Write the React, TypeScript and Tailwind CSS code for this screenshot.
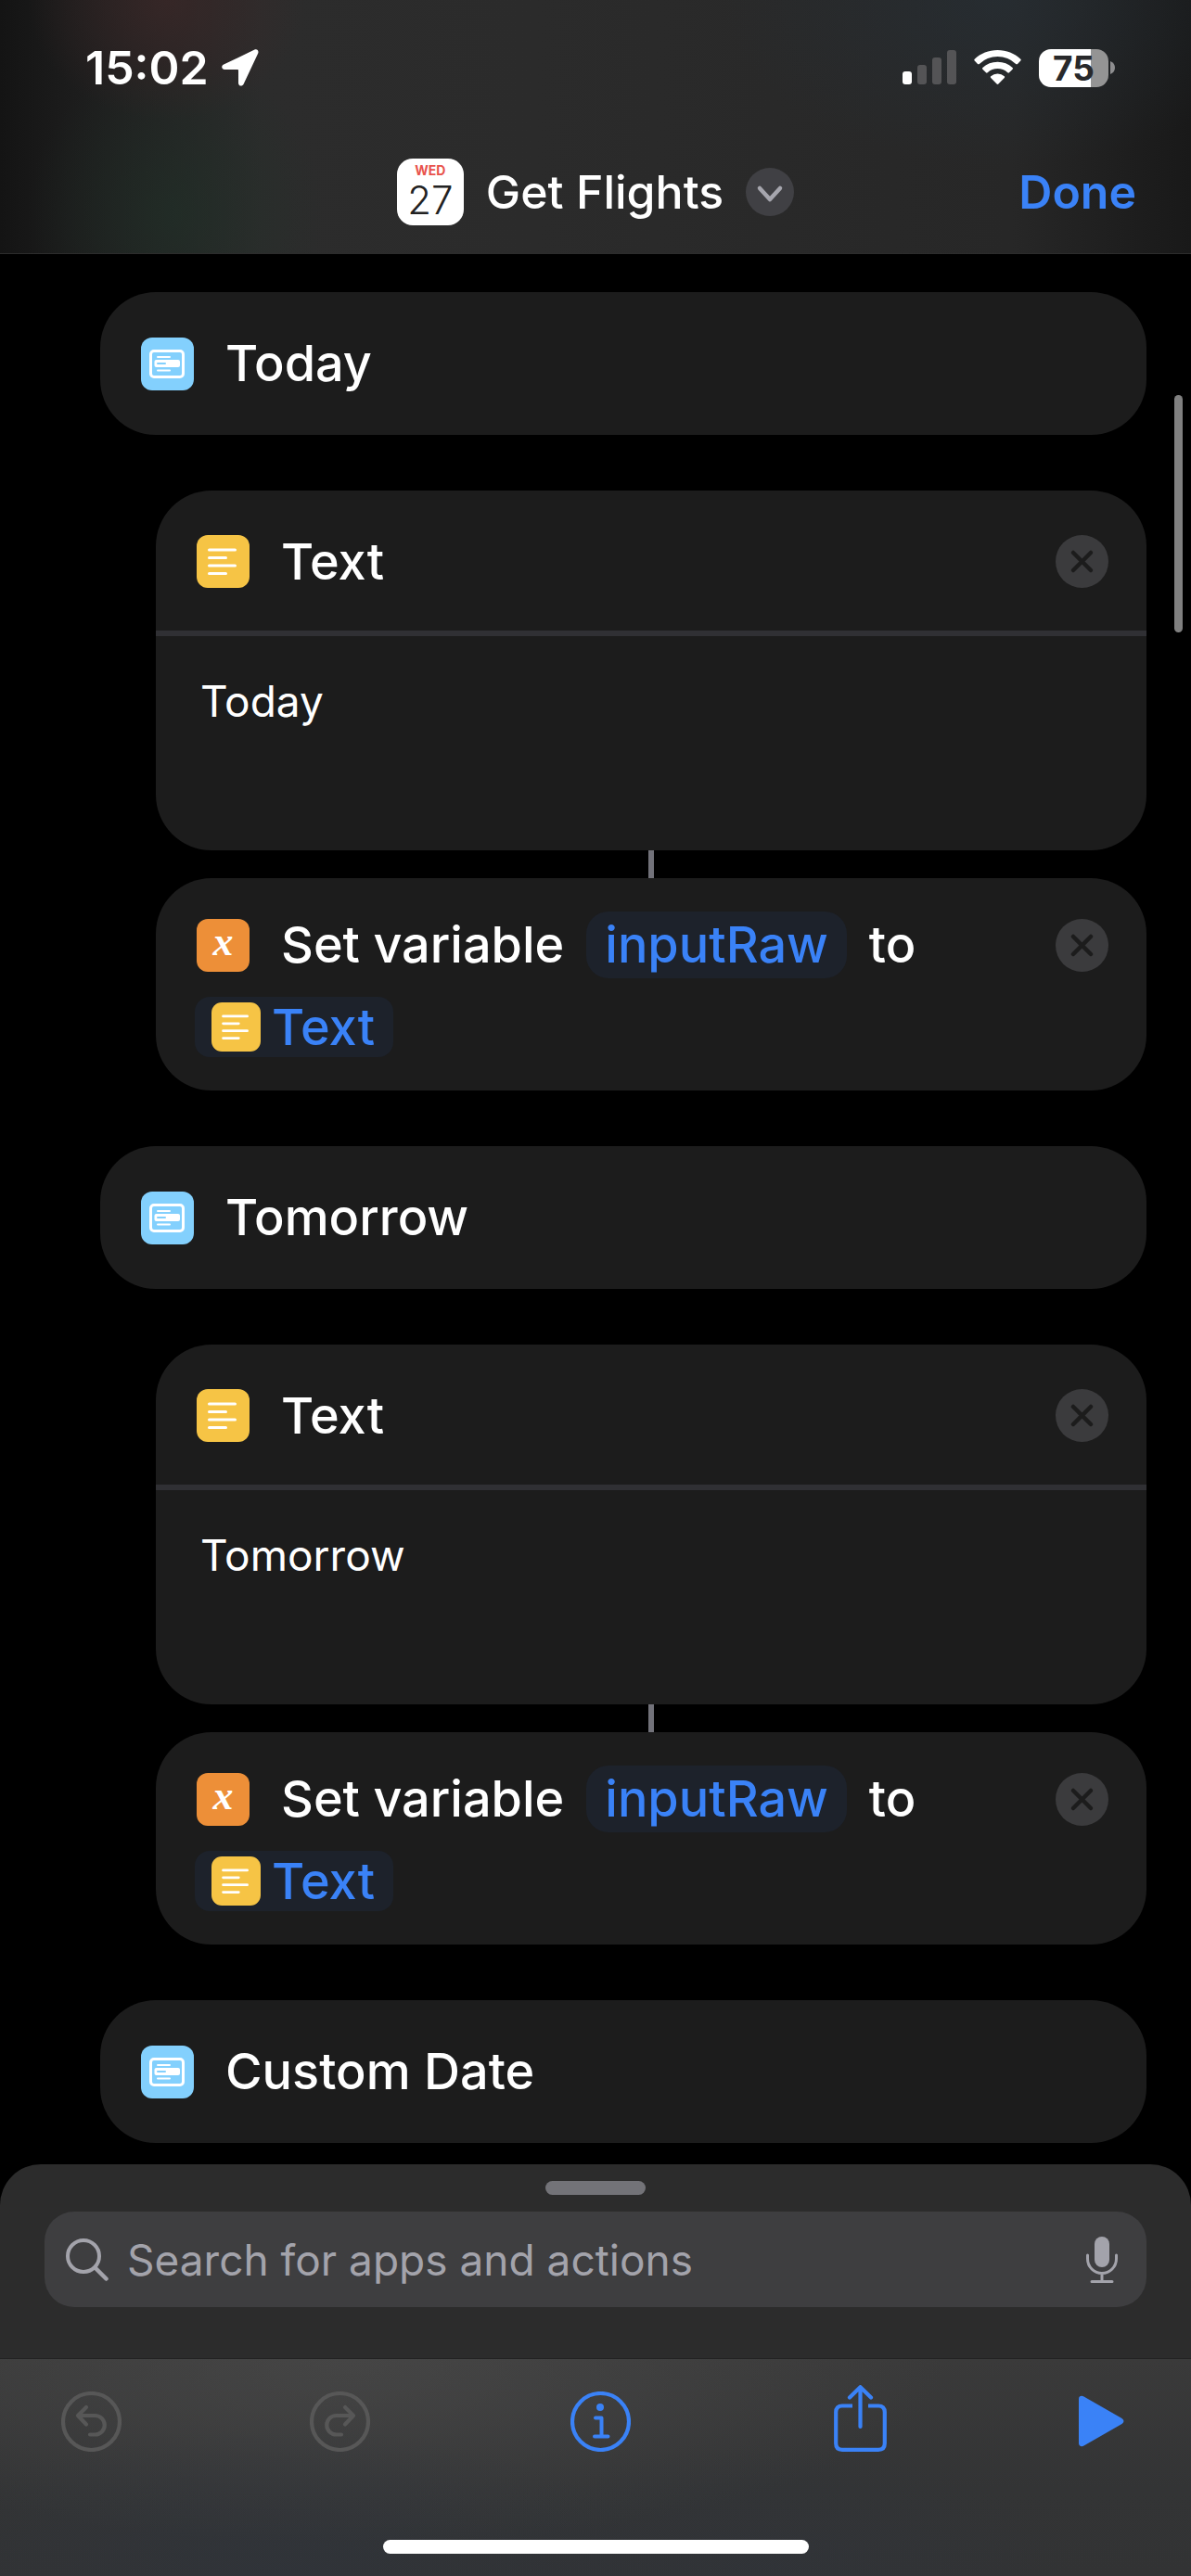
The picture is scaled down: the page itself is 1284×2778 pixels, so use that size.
import React from "react";

const TextLinesIcon = ({ className }: { className: string }) => (
  <svg viewBox="0 0 57 57" className={className} aria-hidden="true">
    <rect width="57" height="57" rx="12" fill="#f6c445" />
    <g stroke="#fff" strokeWidth="3" strokeLinecap="round">
      <path d="M13.5 16H41.5M13.5 24.5H31.5M13.5 33H41.5M13.5 41.5H31.5" />
    </g>
  </svg>
);

const MenuItemIcon = () => (
  <svg viewBox="0 0 57 57" className="size-[57px] shrink-0" aria-hidden="true">
    <rect width="57" height="57" rx="12" fill="#83d0fd" />
    <rect x="10.5" y="14.5" width="35" height="28" rx="3.5" fill="none" stroke="#fff" strokeWidth="3" />
    <rect x="14.5" y="24" width="27.5" height="8" rx="2" fill="#fff" />
    <path d="M18 21H31M18 35.5H31" stroke="#fff" strokeWidth="2" strokeLinecap="round" />
    <path d="M18 28H26" stroke="#83d0fd" strokeWidth="2" strokeLinecap="round" />
  </svg>
);

const VariableIcon = () => (
  <span className="flex size-[57px] shrink-0 items-center justify-center rounded-xl bg-[#ed8f38] pb-1.5 font-['Liberation_Serif',serif] text-[44px] leading-none font-bold text-white italic">
    x
  </span>
);

const CloseButton = () => (
  <button type="button" aria-label="Remove action" className="ml-auto size-[57px] shrink-0">
    <svg viewBox="0 0 57 57" aria-hidden="true">
      <circle cx="28.5" cy="28.5" r="28.5" fill="#3b3b3d" />
      <path d="M19 19L38 38M38 19L19 38" stroke="#1c1c1c" strokeWidth="4.5" strokeLinecap="round" />
    </svg>
  </button>
);

function MenuCase({ title }: { title: string }) {
  return (
    <section className="ml-[60px] flex h-[154px] items-center gap-[34px] rounded-[60px] bg-[#1c1c1c] px-11">
      <MenuItemIcon />
      <h2 className="text-[54px] leading-none font-medium">{title}</h2>
    </section>
  );
}

function TextAction({ value }: { value: string }) {
  return (
    <section className="ml-[120px] overflow-hidden rounded-[60px] bg-[#1c1c1c]">
      <header className="flex h-[151px] items-center gap-[34px] pt-0.5 pr-[41px] pl-11">
        <TextLinesIcon className="size-[57px] shrink-0" />
        <h3 className="text-[54px] leading-none font-medium">Text</h3>
        <CloseButton />
      </header>
      <textarea
        aria-label="Text"
        defaultValue={value}
        className="block h-[237px] w-full resize-none border-t-6 border-[#303034] px-12 py-10 text-[46px] leading-[60px] outline-none"
      />
    </section>
  );
}

function SetVariableAction() {
  return (
    <section className="ml-[120px] flex h-[229px] flex-col items-start gap-5 rounded-[60px] bg-[#1c1c1c] pt-9 pr-[41px] pl-[42px] text-[54px] leading-none font-medium">
      <div className="flex w-full items-center pl-0.5">
        <VariableIcon />
        <span className="ml-[34px]">Set variable</span>
        <button type="button" className="ml-6 h-[72px] rounded-[24px] bg-[#1d222b] px-5 text-[#3a82f7]">
          inputRaw
        </button>
        <span className="ml-6">to</span>
        <CloseButton />
      </div>
      <button type="button" className="flex h-[65px] items-center gap-3 rounded-2xl bg-[#1d222b] pr-5 pl-[18px] text-[#3a82f7]">
        <TextLinesIcon className="size-[53px]" />
        Text
      </button>
    </section>
  );
}

function CaseBlock({ title }: { title: string }) {
  return (
    <>
      <MenuCase title={title} />
      <div className="flex flex-col">
        <TextAction value={title} />
        <div className="ml-[120px] h-[30px] w-1.5 self-center bg-[#72727a]" />
        <SetVariableAction />
      </div>
    </>
  );
}

function StatusBar() {
  return (
    <div className="flex h-[146px] items-center justify-between pr-[82px] pl-[92px]">
      <div className="flex items-center gap-3.5">
        <span className="text-[50px] leading-none font-semibold">15:02</span>
        <svg viewBox="0 0 40 40" className="size-10" fill="#fff" aria-hidden="true">
          <path d="M35.5.6 2.2 16.5C-.9 18-.2 22 3.2 22H17.2Q18 22 18 22.8V36.5C18 40 22.200 40.800 23.700 37.500L39.200 4.500C40.300 1.800 38.200-.6 35.500.6Z" />
        </svg>
      </div>
      <div className="flex items-center">
        <svg viewBox="0 0 58 38" className="h-[38px] w-[58px]" aria-hidden="true">
          <rect y="23" width="10" height="14" rx="3" fill="#fff" />
          <g fill="#545456">
            <rect x="16" y="16" width="10" height="21" rx="3" />
            <rect x="32" y="8" width="10" height="29" rx="3" />
            <rect x="48" width="10" height="37" rx="3" />
          </g>
        </svg>
        <svg viewBox="0 0 51 38" className="ml-[19px] h-[38px] w-[51px]" fill="#fff" aria-hidden="true">
          <path d="M25.500 0C16 0 7.200 3.600.7 9.700Q-.2 10.600.7 11.500L4 14.900Q4.900 15.700 5.800 14.900A28.500 28.500 0 0 1 45.200 14.900Q46.100 15.700 47 14.900L50.300 11.500Q51.200 10.600 50.300 9.700C43.800 3.600 35 0 25.500 0Z" />
          <path d="M25.500 12.700A23.500 23.500 0 0 0 9.400 19Q8.500 19.800 9.400 20.700L13 24.300Q13.800 25 14.700 24.300A16 16 0 0 1 36.300 24.300Q37.200 25 38 24.300L41.600 20.700Q42.500 19.800 41.600 19A23.500 23.500 0 0 0 25.500 12.700Z" />
          <path d="M25.500 25.500A11 11 0 0 0 18.200 28.200Q17.300 29 18.200 29.900L24.600 36.600Q25.500 37.400 26.400 36.600L32.800 29.900Q33.700 29 32.800 28.200A11 11 0 0 0 25.500 25.500Z" />
        </svg>
        <div className="ml-[19px] flex h-[41px] w-[75px] items-center justify-center rounded-[13px] bg-linear-to-r from-white from-75% to-[#949494] to-75% text-[37px] leading-none font-bold text-[#28292b]">
          75
        </div>
        <svg viewBox="0 0 5 14" className="ml-0.5 h-3.5 w-[5px]" aria-hidden="true">
          <path d="M0 0Q5 2 5 7T0 14Z" fill="#8e8e90" />
        </svg>
      </div>
    </div>
  );
}

function Header() {
  return (
    <header className="h-[274px] shrink-0 border-b border-[#2c2c2c] bg-[radial-gradient(ellipse_150px_130px_at_180px_0px,#3e2828b0,transparent),radial-gradient(ellipse_160px_170px_at_190px_230px,#1f32288a,transparent),radial-gradient(ellipse_300px_180px_at_1080px_0px,#26303890,transparent),linear-gradient(90deg,#141414_0%,#1c1c1c_6%,#2c2c2c_22%,#2b2b2b_45%,#272727_85%,#191919_100%)]">
      <StatusBar />
      <div className="grid grid-cols-[1fr_auto_1fr] items-center px-[59px] pt-[25px]">
        <button type="button" className="col-start-2 flex items-center gap-6">
          <span className="flex size-[72px] flex-col items-center rounded-[17px] bg-white pt-1.5">
            <span className="text-[14px] leading-none font-bold text-[#e8524c]">WED</span>
            <span className="text-[42px] leading-[50px] font-light text-[#222]">27</span>
          </span>
          <span className="text-[50px] leading-none font-medium">Get Flights</span>
          <svg viewBox="0 0 52 52" className="size-[52px]" aria-hidden="true">
            <circle cx="26" cy="26" r="26" fill="#404044" />
            <path d="M15 22 26 34 37 22" fill="none" stroke="#a6a6ae" strokeWidth="4.500" strokeLinecap="round" strokeLinejoin="round" />
          </svg>
        </button>
        <button type="button" className="justify-self-end text-[50px] leading-none font-semibold text-[#3a82f7]">
          Done
        </button>
      </div>
    </header>
  );
}

function SearchSheet() {
  return (
    <div className="flex h-[210px] flex-col items-center rounded-t-[44px] border-b border-[#222] bg-[#2c2c2c] px-12 pt-[18px]">
      <div className="h-[15px] w-[108px] rounded-full bg-[#737378]" />
      <label className="mt-[18px] flex h-[103px] w-full items-center rounded-[32px] bg-[#3e3e40] pr-[31px] pl-[23px]">
        <svg viewBox="0 0 46 46" className="size-[46px] shrink-0" fill="none" stroke="#a3a3ab" strokeWidth="4" strokeLinecap="round" aria-hidden="true">
          <circle cx="19" cy="19" r="17" />
          <path d="M31.500 31.500 43.500 43.500" strokeWidth="4.500" />
        </svg>
        <input
          type="search"
          aria-label="Search for apps and actions"
          placeholder="Search for apps and actions"
          className="ml-5 min-w-0 flex-1 bg-transparent text-[46px] leading-[60px] outline-none placeholder:text-[#a3a3ab]"
        />
        <button type="button" aria-label="Dictate" className="shrink-0">
          <svg viewBox="0 0 34 50" className="h-[50px] w-[34px]" fill="none" stroke="#a3a3ab" strokeWidth="3" strokeLinecap="round" aria-hidden="true">
            <rect x="9" width="16" height="33" rx="8" fill="#a3a3ab" stroke="none" />
            <path d="M1.500 20V24A15.500 15.500 0 0 0 32.500 24V20M17 40V48M6 48.500H28" />
          </svg>
        </button>
      </label>
    </div>
  );
}

const UndoShape = () => (
  <>
    <circle cx="32.5" cy="32.5" r="30.500" />
    <path d="M27 17 18 26 27 35.500M19 26H36.500A10.250 10.250 0 0 1 36.500 46.500H31" />
  </>
);

function Toolbar() {
  return (
    <nav className="h-[234px] bg-[radial-gradient(ellipse_420px_160px_at_300px_234px,#2e343d90,transparent),radial-gradient(ellipse_340px_140px_at_820px_234px,#2e343d70,transparent),radial-gradient(ellipse_640px_200px_at_380px_0px,#4a4a4ab0,transparent),linear-gradient(#3a3a3a,#333435_60%,#323334)]">
      <div className="flex h-[134px] items-center justify-between pr-[72px] pl-[66px]">
        <button type="button" aria-label="Undo" disabled>
          <svg viewBox="0 0 65 65" className="size-[65px]" fill="none" stroke="#575757" strokeWidth="4.200" strokeLinecap="round" strokeLinejoin="round">
            <UndoShape />
          </svg>
        </button>
        <button type="button" aria-label="Redo" disabled className="flex w-[90px] justify-center">
          <svg viewBox="0 0 65 65" className="size-[65px]" fill="none" stroke="#575757" strokeWidth="4.200" strokeLinecap="round" strokeLinejoin="round">
            <g transform="matrix(-1 0 0 1 65 0)">
              <UndoShape />
            </g>
          </svg>
        </button>
        <button type="button" aria-label="Shortcut details" className="flex w-[90px] justify-center">
          <svg viewBox="0 0 65 65" className="size-[65px]" fill="none" stroke="#3a82f7" strokeWidth="4.200" strokeLinecap="round" strokeLinejoin="round">
            <circle cx="32.5" cy="32.5" r="30.500" />
            <circle cx="32" cy="17" r="4" fill="#3a82f7" stroke="none" />
            <path d="M27 28.500H33.500V48.500M26 48.500H40.500" strokeWidth="4" />
          </svg>
        </button>
        <button type="button" aria-label="Share" className="flex w-[90px] justify-center">
          <svg viewBox="0 0 57 78" className="h-[78px] w-[57px]" fill="none" stroke="#3a82f7" strokeWidth="4.200" strokeLinecap="round" strokeLinejoin="round">
            <path d="M20 22.500H9Q2.200 22.500 2.200 29.300V63Q2.200 69.800 9 69.800H48Q54.800 69.800 54.800 63V29.300Q54.800 22.500 48 22.500H37" strokeLinecap="butt" />
            <path d="M28.500 45V3M17 13.500 28.500 2.200 40 13.500" />
          </svg>
        </button>
        <button type="button" aria-label="Run">
          <svg viewBox="0 0 49 56" className="h-14 w-[49px]" fill="#3a82f7">
            <path d="M0 4C0 1 3 0 5.500 1.500L46.500 25Q50.500 28 46.500 31L5.500 54.500C3 56 0 55 0 52Z" />
          </svg>
        </button>
      </div>
      <div className="mx-auto mt-[61px] h-[15px] w-[459px] rounded-full bg-white" />
    </nav>
  );
}

export default function App() {
  return (
    <div className="flex h-screen flex-col overflow-hidden bg-black font-['Inter',sans-serif] text-white">
      <Header />
      <main className="relative flex min-h-0 flex-1 flex-col gap-[60px] overflow-hidden px-12 pt-[41px]">
        <CaseBlock title="Today" />
        <CaseBlock title="Tomorrow" />
        <MenuCase title="Custom Date" />
        <div className="absolute top-[152px] right-[9px] h-64 w-[9px] rounded-full bg-[#808080]" />
      </main>
      <footer className="shrink-0">
        <SearchSheet />
        <Toolbar />
      </footer>
    </div>
  );
}
